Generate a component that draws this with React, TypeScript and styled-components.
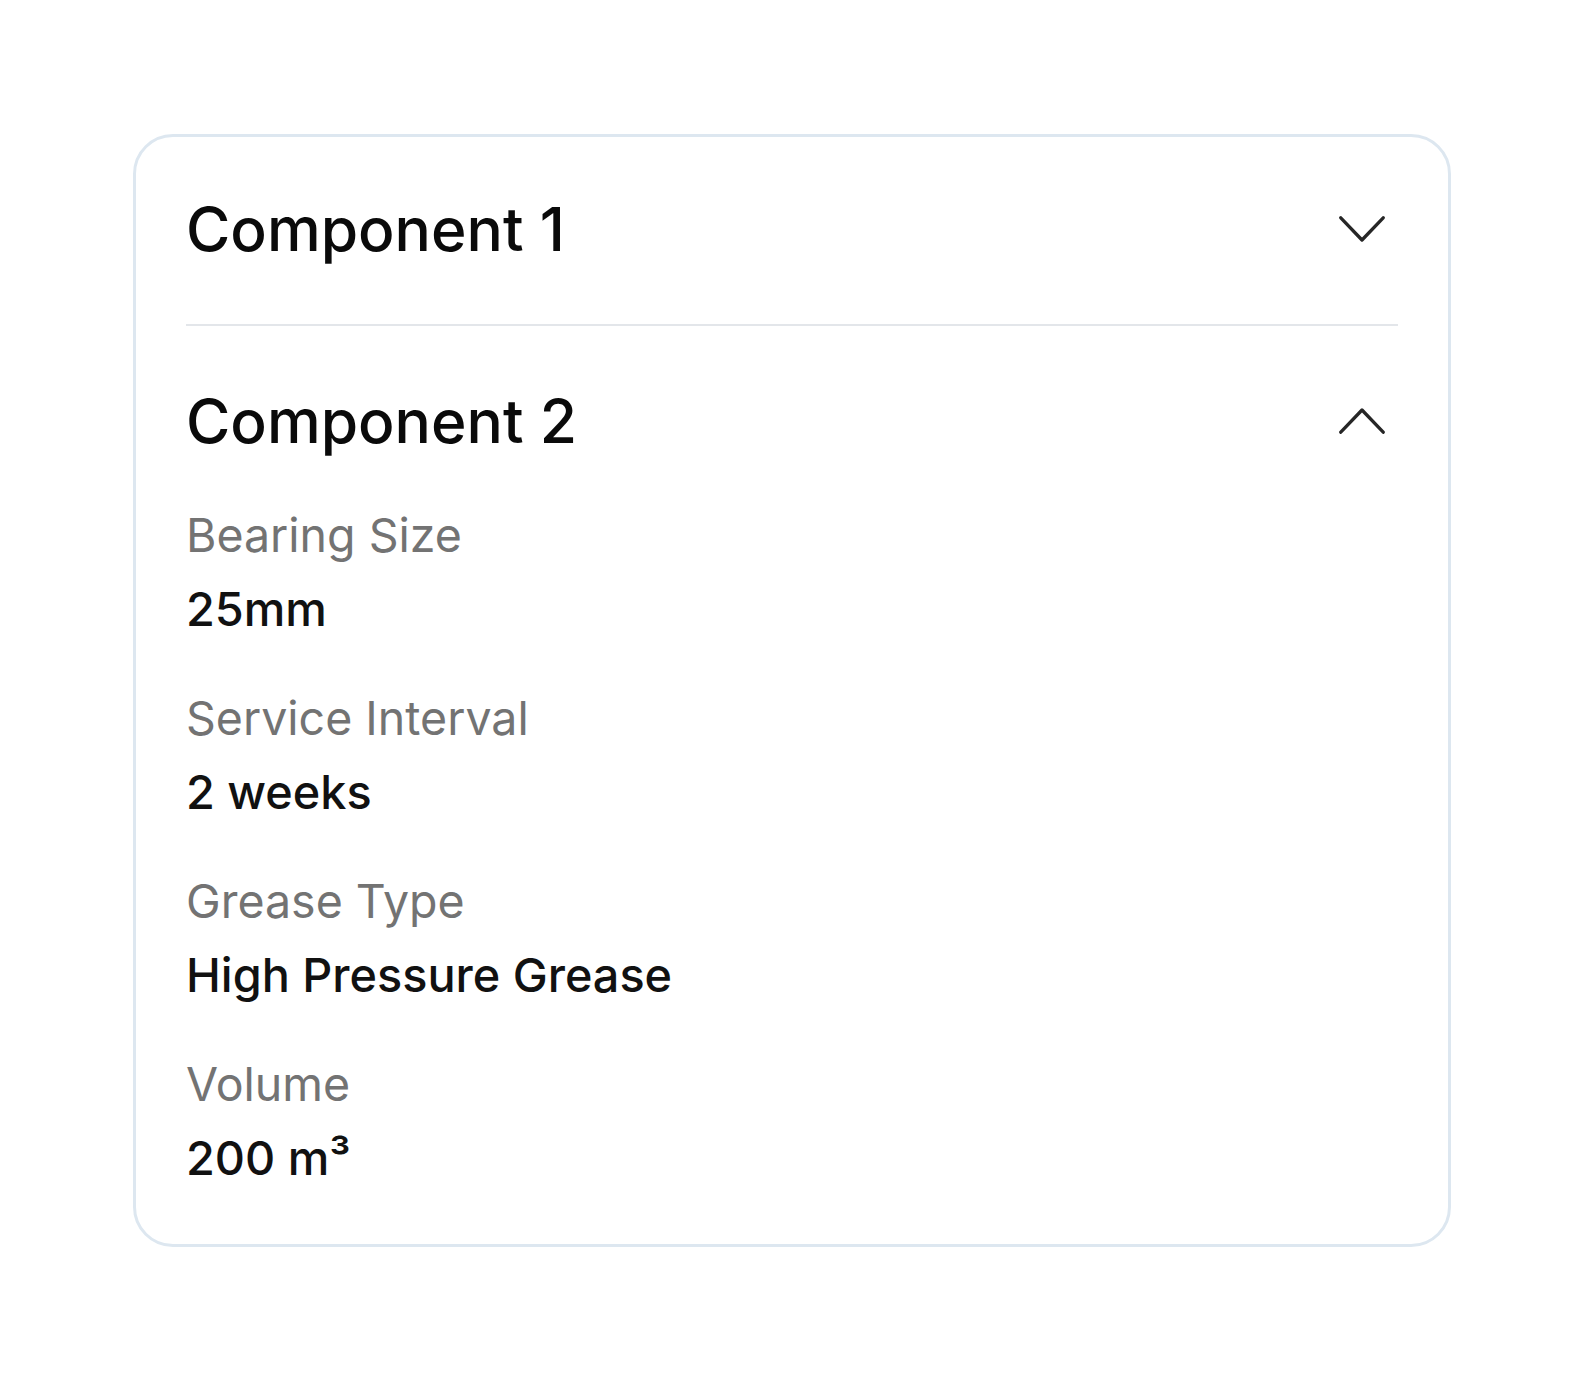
import { useState } from "react";
import styled, { createGlobalStyle } from "styled-components";

const GlobalStyle = createGlobalStyle`
  html, body {
    margin: 0;
    padding: 0;
    background: #ffffff;
  }
  body {
    font-family: Inter, "Noto Sans", "Liberation Sans", sans-serif;
    -webkit-font-smoothing: antialiased;
  }
  * {
    box-sizing: border-box;
  }
`;

type Spec = { label: string; value: string };
type Part = { id: number; title: string; specs: Spec[] };

const parts: Part[] = [
  {
    id: 1,
    title: "Component 1",
    specs: [],
  },
  {
    id: 2,
    title: "Component 2",
    specs: [
      { label: "Bearing Size", value: "25mm" },
      { label: "Service Interval", value: "2 weeks" },
      { label: "Grease Type", value: "High Pressure Grease" },
      { label: "Volume", value: "200 m³" },
    ],
  },
];

const Page = styled.div`
  padding: 134px 133px;
`;

const Card = styled.div`
  width: 100%;
  border: 3px solid #dde7f0;
  border-radius: 40px;
  padding: 0 50px 52px;
  background: #ffffff;
`;

const Item = styled.div<{ $last?: boolean }>`
  border-bottom: ${(p) => (p.$last ? "none" : "2px solid #e3e6ea")};

  & + & {
    padding-top: 3px;
  }
`;

const Header = styled.button<{ $open: boolean }>`
  display: flex;
  align-items: center;
  justify-content: space-between;
  width: 100%;
  padding: 56px 0 ${(p) => (p.$open ? "44px" : "59px")};
  border: none;
  background: none;
  cursor: pointer;
  font-family: inherit;
  text-align: left;
`;

const Title = styled.span`
  font-size: 60.5px;
  line-height: 72px;
  font-weight: 500;
  color: #0a0a0a;
`;

const Chevron = styled.svg`
  margin-right: 13px;
  flex-shrink: 0;
`;

const Panel = styled.div`
  display: flex;
  flex-direction: column;
  gap: 41px;
`;

const Spec = styled.div`
  display: flex;
  flex-direction: column;
  gap: 6px;
`;

const Label = styled.span`
  font-size: 46.5px;
  line-height: 68px;
  font-weight: 400;
  color: #737373;
`;

const Value = styled.span`
  font-size: 46.8px;
  line-height: 68px;
  font-weight: 500;
  color: #111111;
`;

const Arrow = ({ up }: { up: boolean }) => (
  <Chevron width="46" height="26" viewBox="0 0 46 26" fill="none">
    <polyline
      points={up ? "1.8,24.2 23,2 44.2,24.2" : "1.8,1.8 23,24 44.2,1.8"}
      stroke="#262626"
      strokeWidth="3.3"
      strokeLinecap="round"
      strokeLinejoin="round"
    />
  </Chevron>
);

export default function App() {
  const [openId, setOpenId] = useState<number | null>(2);

  return (
    <>
      <GlobalStyle />
      <Page>
        <Card>
          {parts.map((part, i) => {
            const open = openId === part.id;
            return (
              <Item key={part.id} $last={i === parts.length - 1}>
                <Header
                  $open={open}
                  onClick={() => setOpenId(open ? null : part.id)}
                >
                  <Title>{part.title}</Title>
                  <Arrow up={open} />
                </Header>
                {open && (
                  <Panel>
                    {part.specs.map((s) => (
                      <Spec key={s.label}>
                        <Label>{s.label}</Label>
                        <Value>{s.value}</Value>
                      </Spec>
                    ))}
                  </Panel>
                )}
              </Item>
            );
          })}
        </Card>
      </Page>
    </>
  );
}
